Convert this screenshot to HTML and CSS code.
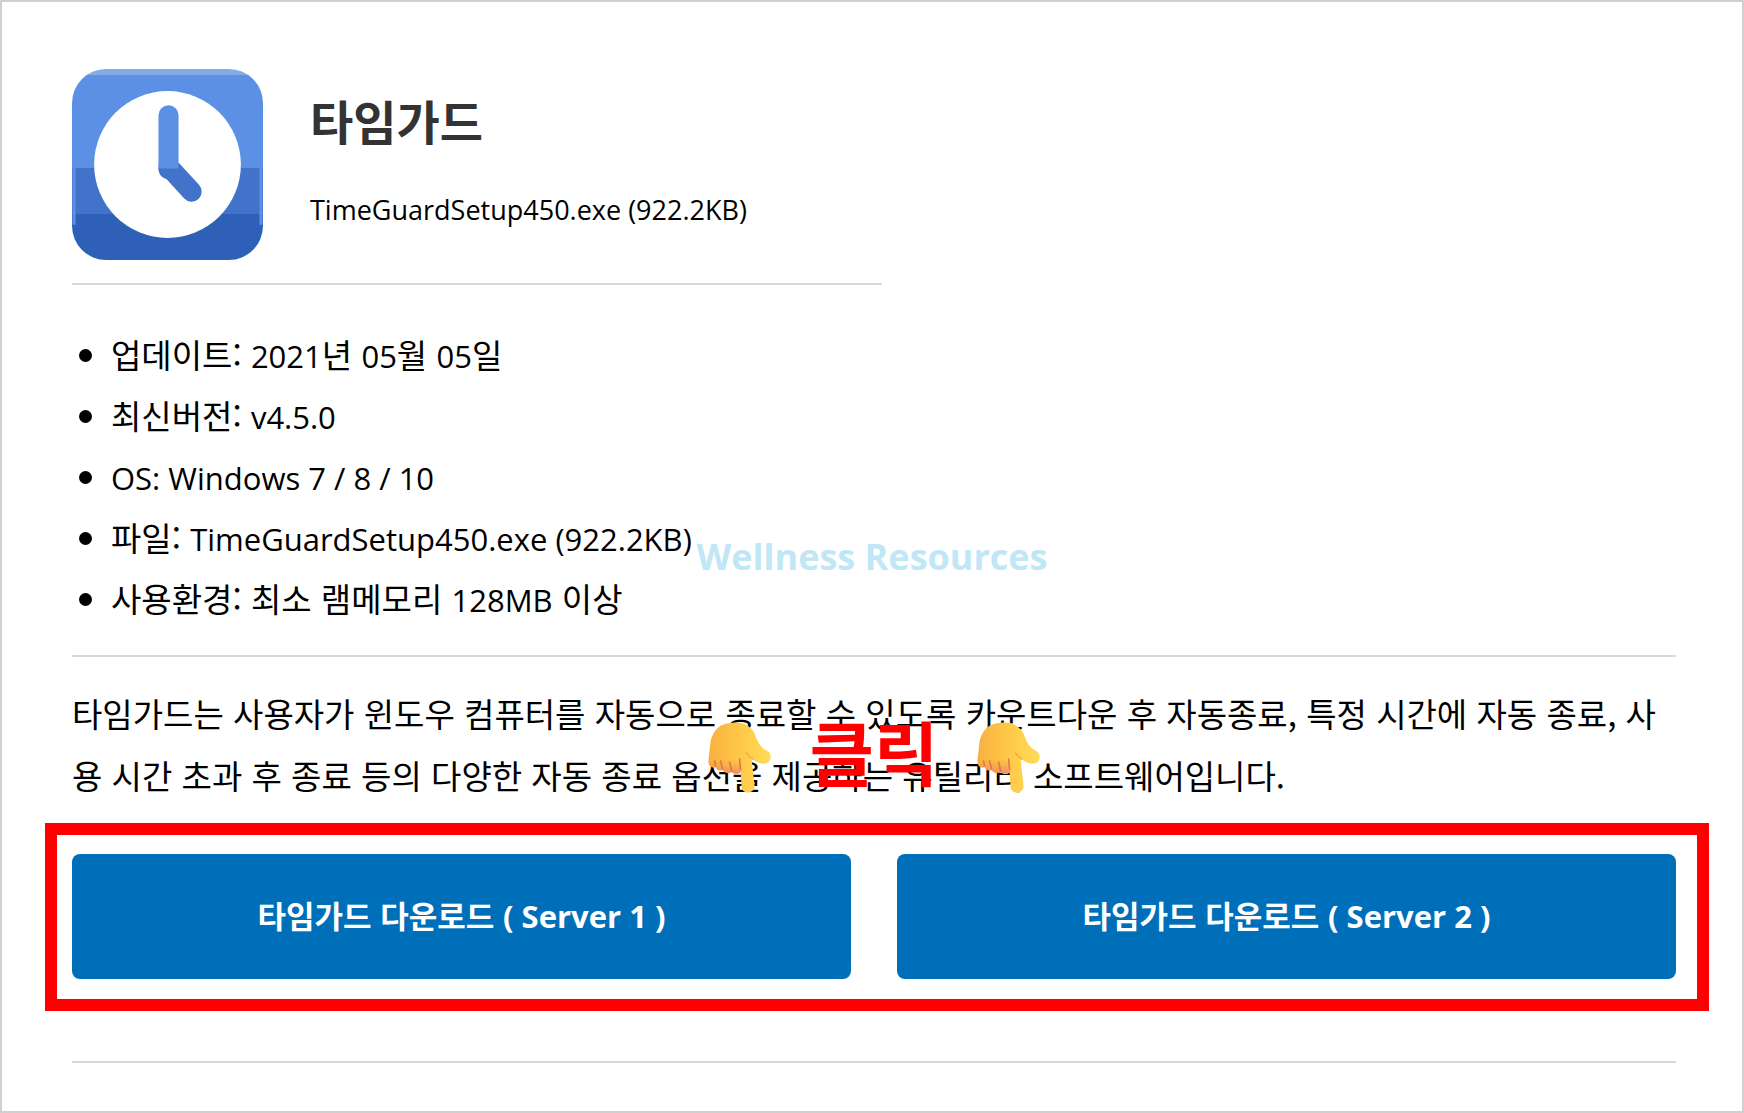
FILE: index.html
```
<!DOCTYPE html>
<html lang="ko">
<head>
    <meta charset="UTF-8">
    <meta name="viewport" content="width=device-width, initial-scale=1.0">
    <title>타임가드</title>
    <link rel="stylesheet" href="styles.css">
</head>
<body>

<!-- shared pointing hand -->
<svg class="defs" aria-hidden="true">
    <defs>
        <linearGradient id="hand-fill" x1="0" y1="0" x2="1" y2="0">
            <stop offset="0" stop-color="#f8b040" />
            <stop offset="0.5" stop-color="#ffc848" />
            <stop offset="1" stop-color="#ffdc58" />
        </linearGradient>
        <linearGradient id="finger-tip" x1="0" y1="0" x2="0" y2="1">
            <stop offset="0" stop-color="#f5a040" stop-opacity="0" />
            <stop offset="1" stop-color="#f08870" />
        </linearGradient>
    </defs>
    <symbol id="hand" viewBox="0 0 64 72">
        <path fill="url(#hand-fill)" d="M3 20C6 8 13 2 24 2c12-2 22 4 25 16 3 7 7 10 11 12 4 3 4 8 1 11-5 4-12 0-17-3l3 27c0 8-12 9-13 1l-1-15c-2 3-6 3-9 0-3 2-7 1-9-2-3 1-6 0-7-3-5 2-8-2-7-8z" />
        <path fill="url(#finger-tip)" d="M1 38h32l1 12c-3 4-7 3-10 1-3 2-7 1-9-2-3 1-6 0-7-3-5 2-8-2-7-8z" />
        <path fill="none" stroke="#d9774a" stroke-width="1.5" stroke-linecap="round" d="M8 45l-1-5M15 48l-2-8M24 50l-2-9M33 48l-1-10" />
        <path fill="none" stroke="#f2a935" stroke-width="1.5" stroke-linecap="round" d="M45 38c-3-2-5-4-6-6" />
    </symbol>
</svg>

<main class="page">
    <header class="app-header">
        <svg class="app-icon" viewBox="0 0 190 190" role="img" aria-label="타임가드">
            <defs>
                <linearGradient id="icon-bg" x1="0" y1="0" x2="0" y2="1">
                    <stop offset="0" stop-color="#85aae8" />
                    <stop offset="0.03" stop-color="#85aae8" />
                    <stop offset="0.03" stop-color="#5b90e4" />
                    <stop offset="0.52" stop-color="#5b90e4" />
                    <stop offset="0.52" stop-color="#4273cb" />
                    <stop offset="0.76" stop-color="#4273cb" />
                    <stop offset="0.76" stop-color="#2f60b8" />
                </linearGradient>
            </defs>
            <rect width="190" height="190" rx="34" fill="url(#icon-bg)" />
            <path d="M2 35v120M188 35v120" stroke="#5b90e4" stroke-width="3" />
            <circle cx="95" cy="95" r="73" fill="#fff" />
            <path d="M96 97l23 25" fill="none" stroke="#4273cb" stroke-width="20" stroke-linecap="round" />
            <path d="M96 46v53" fill="none" stroke="#5b90e4" stroke-width="20" stroke-linecap="round" />
            <path d="M86 99h20c0 14-20 14-20 0z" fill="#4273cb" />
        </svg>
        <div>
            <h1>타임가드</h1>
            <p class="file-name">TimeGuardSetup450.exe (922.2KB)</p>
        </div>
    </header>

    <ul class="info">
        <li>업데이트: <span class="en">2021</span>년 <span class="en">05</span>월 <span class="en">05</span>일</li>
        <li>최신버전: <span class="en">v4.5.0</span></li>
        <li><span class="en">OS: Windows 7 / 8 / 10</span></li>
        <li>파일: <span class="en">TimeGuardSetup450.exe (922.2KB)</span></li>
        <li>사용환경: 최소 램메모리 <span class="en">128MB</span> 이상</li>
    </ul>

    <p class="description">타임가드는 사용자가 윈도우 컴퓨터를 자동으로 종료할 수 있도록 카운트다운 후 자동종료, 특정 시간에 자동 종료, 사용 시간 초과 후 종료 등의 다양한 자동 종료 옵션을 제공하는 유틸리티 소프트웨어입니다.</p>

    <section class="download">
        <div class="click-here">
            <svg class="hand"><use href="#hand" /></svg>
            <strong>클릭</strong>
            <svg class="hand"><use href="#hand" /></svg>
        </div>
        <div class="download-box">
            <button type="button">타임가드 다운로드 <span class="en">( Server 1 )</span></button>
            <button type="button">타임가드 다운로드 <span class="en">( Server 2 )</span></button>
        </div>
    </section>

    <div class="watermark">Wellness Resources</div>
</main>

</body>
</html>
```

FILE: styles.css
```
* {
    box-sizing: border-box;
}

body {
    margin: 0;
    background-color: #fff;
    font-family: "Noto Sans CJK KR", sans-serif;
    font-size: 33px;
    color: #000;
}

.defs {
    position: absolute;
    width: 0;
    height: 0;
}

.page {
    position: relative;
    min-height: 100vh;
    padding: 67px 66px 40px 70px;
    border: 2px solid #d0d0d0;
}

.en {
    font-family: "Open Sans", sans-serif;
    font-size: 31px;
}

.app-header {
    display: flex;
    gap: 47px;
    width: 810px;
    max-width: 100%;
    padding-bottom: 23px;
    border-bottom: 2px solid #d8d8d8;
}

.app-icon {
    flex: none;
    width: 191px;
    height: 191px;
}

h1 {
    margin: 19px 0 28px;
    font-size: 47px;
    line-height: 64px;
    color: #333;
}

.file-name {
    margin: 0;
    font-family: "Open Sans", sans-serif;
    font-size: 27px;
    line-height: 60px;
}

.info {
    margin: 39px 0 0;
    padding: 0 0 26px 39px;
    line-height: 61px;
    border-bottom: 2px solid #d8d8d8;
}

.info li {
    height: 61px;
}

.description {
    margin: 25px 0 17px;
    line-height: 62px;
}

.download {
    position: relative;
    padding-bottom: 50px;
    border-bottom: 2px solid #d8d8d8;
}

.download-box {
    display: flex;
    gap: 46px;
    margin: 0 -33px 0 -27px;
    padding: 19px 21px 20px 15px;
    border: 12px solid #f00;
}

button {
    flex: 1;
    height: 125px;
    padding: 0 0 4px;
    border: none;
    border-radius: 8px;
    background-color: #006fba;
    color: #fff;
    font-family: inherit;
    font-size: 31px;
    font-weight: bold;
    cursor: pointer;
}

/* sits over the end of the description */
.click-here {
    position: absolute;
    left: 50%;
    bottom: 100%;
    transform: translateX(-50%);
    display: flex;
    align-items: center;
    gap: 38px;
    margin-bottom: 22px;
}

.click-here strong {
    padding-bottom: 12px;
    font-size: 70px;
    font-weight: 700;
    line-height: 76px;
    color: #f00;
}

.hand {
    width: 64px;
    height: 72px;
}

.watermark {
    position: absolute;
    top: 50%;
    left: 50%;
    transform: translate(-50%, -50%);
    font-family: "Open Sans", sans-serif;
    font-size: 36px;
    font-weight: bold;
    line-height: 48px;
    white-space: nowrap;
    color: #c1e6f6;
}
```
